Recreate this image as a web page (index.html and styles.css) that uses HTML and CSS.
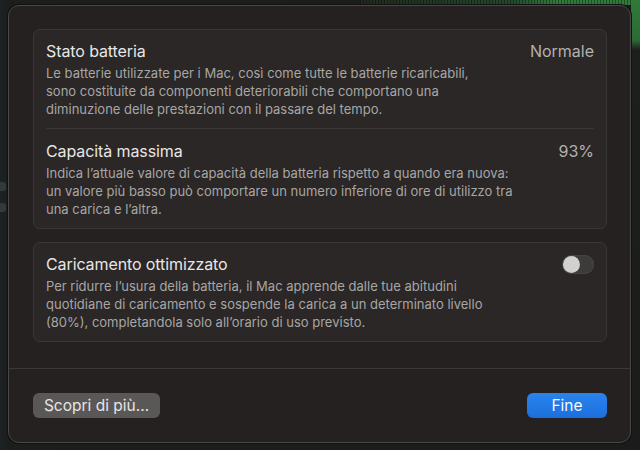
FILE: index.html
```html
<!DOCTYPE html>
<html lang="it">
<head>
<meta charset="utf-8">
<link rel="stylesheet" href="styles.css">
</head>
<body>
<div class="desktop">
  <div class="top-strip"></div>
  <div class="side-strip"></div>
  <div class="left-ghost"><span class="ghost-a"></span><span class="ghost-b"></span></div>
  <div class="dialog">
    <div class="content">
      <section class="card">
        <div class="row">
          <div class="row-head">
            <span class="title">Stato batteria</span>
            <span class="value">Normale</span>
          </div>
          <p class="desc">Le batterie utilizzate per i Mac, così come tutte le batterie ricaricabili,<br>sono costituite da componenti deteriorabili che comportano una<br>diminuzione delle prestazioni con il passare del tempo.</p>
        </div>
        <div class="divider"></div>
        <div class="row">
          <div class="row-head">
            <span class="title">Capacità massima</span>
            <span class="value">93%</span>
          </div>
          <p class="desc">Indica l’attuale valore di capacità della batteria rispetto a quando era nuova:<br>un valore più basso può comportare un numero inferiore di ore di utilizzo tra<br>una carica e l’altra.</p>
        </div>
      </section>
      <section class="card">
        <div class="row">
          <div class="row-head">
            <span class="title">Caricamento ottimizzato</span>
            <span class="toggle"><span class="knob"></span></span>
          </div>
          <p class="desc">Per ridurre l’usura della batteria, il Mac apprende dalle tue abitudini<br>quotidiane di caricamento e sospende la carica a un determinato livello<br>(80%), completandola solo all’orario di uso previsto.</p>
        </div>
      </section>
    </div>
    <div class="footer">
      <button class="btn btn-secondary">Scopri di più…</button>
      <button class="btn btn-primary">Fine</button>
    </div>
  </div>
</div>
</body>
</html>
```

FILE: styles.css
```css
* { box-sizing: border-box; }

html, body {
  margin: 0;
  padding: 0;
  width: 640px;
  height: 450px;
  overflow: hidden;
  background: #1c1d1d;
  font-family: "Inter", "Liberation Sans", Arial, sans-serif;
  -webkit-font-smoothing: antialiased;
}

.desktop {
  position: relative;
  width: 640px;
  height: 450px;
  padding: 5px 9px 7px 8px;
  background: linear-gradient(90deg, #1e2222 0, #1c1e1e 8px, #1b1b1b 100%);
}

.top-strip {
  position: absolute;
  top: 0;
  left: 360px;
  width: 280px;
  height: 5px;
  background:
    repeating-linear-gradient(90deg, rgba(0,0,0,0.35) 0 1px, transparent 1px 3px),
    linear-gradient(90deg, #1f2a1f 0, #24472a 150px, #2f7a3a 195px, #2f7a3a 100%);
}

.side-strip {
  position: absolute;
  top: 0;
  right: 0;
  width: 9px;
  height: 450px;
  background: linear-gradient(180deg, #2f7a3a 0, #2c6a35 40px, #1c1f1d 50px, #1b1b1b 100%);
}

.left-ghost {
  position: absolute;
  left: 0;
  top: 182px;
  display: flex;
  flex-direction: column;
  gap: 12px;
}

.ghost-a, .ghost-b {
  display: block;
  width: 6px;
  height: 9px;
  border-radius: 0 3px 3px 0;
  background: #323b3c;
}

.dialog {
  position: relative;
  width: 623px;
  height: 438px;
  background: #242120;
  border: 1px solid #4a4847;
  border-radius: 11px;
  box-shadow: 0 0 0 1px #111;
  display: flex;
  flex-direction: column;
}

.content {
  padding: 23px 23px 0 24px;
  display: flex;
  flex-direction: column;
  gap: 13px;
  height: 362px;
}

.card {
  background: #2a2726;
  border: 1px solid #3a3837;
  border-radius: 7px;
}

.row {
  padding: 12px 12px 10px 12px;
}

.row + .divider + .row {
  padding-top: 13px;
}

.divider {
  height: 1px;
  margin: 0 12px;
  background: #3a3837;
}

.row-head {
  display: flex;
  justify-content: space-between;
  align-items: center;
  height: 19px;
  margin-bottom: 3px;
}

.title {
  color: #e8e6e5;
  font-size: 16px;
  line-height: 19px;
  letter-spacing: -0.1px;
}

.value {
  color: #b3b1af;
  font-size: 16px;
  line-height: 19px;
}

.desc {
  margin: 0;
  color: #a8a6a5;
  font-size: 13px;
  line-height: 18px;
  letter-spacing: 0;
}

.toggle {
  width: 32px;
  height: 19px;
  border-radius: 10px;
  background: #3d3b3a;
  box-shadow: inset 0 0 0 1px #464443;
  display: flex;
  align-items: center;
  padding: 1px;
}

.knob {
  width: 17px;
  height: 17px;
  border-radius: 50%;
  background: #d2d1d0;
}

.footer {
  border-top: 1px solid #3b3938;
  display: flex;
  justify-content: space-between;
  padding: 24px 23px 0 24px;
}

.btn {
  height: 25px;
  border: none;
  border-radius: 6px;
  font-family: "Inter", "Liberation Sans", Arial, sans-serif;
  font-size: 15.5px;
  line-height: 25px;
  padding: 0;
}

.btn-secondary {
  width: 127px;
  background: #5a5857;
  color: #e6e5e4;
}

.btn-primary {
  width: 80px;
  background: linear-gradient(180deg, #2a84ee 0, #1b6fdc 100%);
  color: #f4f8ff;
}
```
